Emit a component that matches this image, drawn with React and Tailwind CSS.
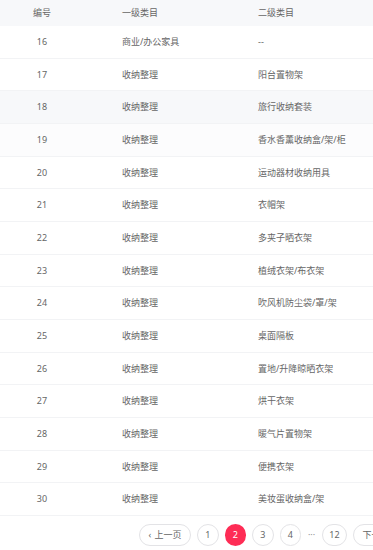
import React from "react";

const rows = [
  ["16", "商业/办公家具", "--"],
  ["17", "收纳整理", "阳台置物架"],
  ["18", "收纳整理", "旅行收纳套装"],
  ["19", "收纳整理", "香水香薰收纳盒/架/柜"],
  ["20", "收纳整理", "运动器材收纳用具"],
  ["21", "收纳整理", "衣帽架"],
  ["22", "收纳整理", "多夹子晒衣架"],
  ["23", "收纳整理", "植绒衣架/布衣架"],
  ["24", "收纳整理", "吹风机防尘袋/罩/架"],
  ["25", "收纳整理", "桌面隔板"],
  ["26", "收纳整理", "置地/升降晾晒衣架"],
  ["27", "收纳整理", "烘干衣架"],
  ["28", "收纳整理", "暖气片置物架"],
  ["29", "收纳整理", "便携衣架"],
  ["30", "收纳整理", "美妆蛋收纳盒/架"],
];

export default function App() {
  return (
    <div
      className="w-[373px] h-[550px] overflow-hidden bg-white text-[#666] text-[9px]"
      style={{ fontFamily: '"Noto Sans", "Noto Sans CJK SC", sans-serif' }}
    >
      <div className="flex items-center h-[26px] bg-[#f7f8fa]">
        <div className="w-[84px] text-center">编号</div>
        <div className="w-[174px] pl-[38px]">一级类目</div>
        <div className="flex-1">二级类目</div>
      </div>
      {rows.map((r, i) => (
        <div
          key={r[0]}
          className={
            "flex items-center h-[32.67px] border-b border-[#f2f3f5] " +
            (i === 2 ? "bg-[#f7f8fa]" : i === 3 ? "bg-[#fcfcfd]" : "bg-white")
          }
        >
          <div className="w-[84px] text-center">{r[0]}</div>
          <div className="w-[174px] pl-[38px]">{r[1]}</div>
          <div className="flex-1 whitespace-nowrap">{r[2]}</div>
        </div>
      ))}
      <div className="flex items-center gap-[6px] pl-[139px] pt-[8px] whitespace-nowrap">
        <div className="flex items-center justify-center gap-[3px] w-[52px] h-[22px] rounded-full border border-[#e3e3e6] shrink-0">
          <span className="text-[9px] leading-none">‹</span>
          <span>上一页</span>
        </div>
        <div className="flex items-center justify-center w-[21.5px] h-[22px] rounded-full border border-[#e3e3e6] shrink-0">1</div>
        <div className="flex items-center justify-center w-[21.5px] h-[22px] rounded-full bg-[#fe2c55] text-white shrink-0">2</div>
        <div className="flex items-center justify-center w-[21.5px] h-[22px] rounded-full border border-[#e3e3e6] shrink-0">3</div>
        <div className="flex items-center justify-center w-[21.5px] h-[22px] rounded-full border border-[#e3e3e6] shrink-0">4</div>
        <div className="w-[9px] flex justify-center text-[#999] shrink-0 overflow-visible">···</div>
        <div className="flex items-center justify-center w-[25px] h-[22px] rounded-full border border-[#e3e3e6] shrink-0">12</div>
        <div className="flex items-center justify-center gap-[3px] w-[52px] h-[22px] rounded-full border border-[#e3e3e6] shrink-0">
          <span>下一页</span>
          <span className="text-[9px] leading-none">›</span>
        </div>
      </div>
    </div>
  );
}
